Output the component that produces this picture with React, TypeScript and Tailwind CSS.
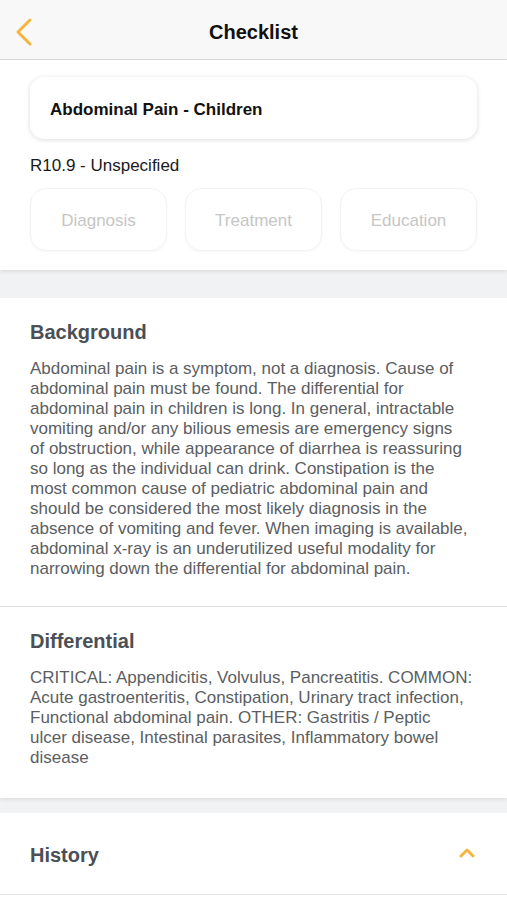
import React from "react";

const font = { fontFamily: '"Liberation Sans", Arial, sans-serif' };

function Section({ title, lines }: { title: string; lines: string[] }) {
  return (
    <div className="px-[30px] pt-[22px]">
      <h2 className="text-[20px] leading-[24px] font-bold text-[#4a5056]">{title}</h2>
      <div className="mt-[15px] text-[17px] leading-[20px] text-[#5b5e62]">
        {lines.map((l, i) => (
          <div key={i} className="whitespace-nowrap">
            {l}
          </div>
        ))}
      </div>
    </div>
  );
}

const background = [
  "Abdominal pain is a symptom, not a diagnosis. Cause of",
  "abdominal pain must be found. The differential for",
  "abdominal pain in children is long. In general, intractable",
  "vomiting and/or any bilious emesis are emergency signs",
  "of obstruction, while appearance of diarrhea is reassuring",
  "so long as the individual can drink. Constipation is the",
  "most common cause of pediatric abdominal pain and",
  "should be considered the most likely diagnosis in the",
  "absence of vomiting and fever. When imaging is available,",
  "abdominal x-ray is an underutilized useful modality for",
  "narrowing down the differential for abdominal pain.",
];

const differential = [
  "CRITICAL: Appendicitis, Volvulus, Pancreatitis. COMMON:",
  "Acute gastroenteritis, Constipation, Urinary tract infection,",
  "Functional abdominal pain. OTHER: Gastritis / Peptic",
  "ulcer disease, Intestinal parasites, Inflammatory bowel",
  "disease",
];

export default function App() {
  return (
    <div className="w-[507px] h-[900px] overflow-hidden bg-white" style={font}>
      {/* Header */}
      <div className="relative h-[60px] bg-[#f8f8f8] border-b border-[#d9d9d9] flex items-center justify-center">
        <svg className="absolute left-[12px] top-[16px]" width="24" height="32" viewBox="0 0 24 32">
          <polyline points="18,4 6,16 18,28" fill="none" stroke="#f4b63f" strokeWidth="3" strokeLinecap="round" strokeLinejoin="round" />
        </svg>
        <h1 className="pt-[4px] text-[20px] font-semibold text-[#111]">Checklist</h1>
      </div>

      {/* Top section */}
      <div className="relative z-10 bg-white px-[30px] pt-[17px] pb-[19px] shadow-[0_2px_3px_rgba(0,0,0,0.08)]">
        <div className="h-[62px] rounded-[14px] bg-white shadow-[0_1px_5px_rgba(0,0,0,0.14)] flex items-center px-[20px]">
          <span className="pt-[3px] text-[17px] font-bold text-[#111]">Abdominal Pain - Children</span>
        </div>
        <div className="mt-[17px] text-[17px] leading-[20px] text-[#1a1a1a]">R10.9 - Unspecified</div>
        <div className="mt-[12px] grid grid-cols-3 gap-[18px]">
          {["Diagnosis", "Treatment", "Education"].map((t) => (
            <div
              key={t}
              className="h-[63px] pt-[3px] rounded-[16px] border border-[#f2f2f2] shadow-[0_1px_3px_rgba(0,0,0,0.04)] flex items-center justify-center text-[17px] text-[#c6c6c6]"
            >
              {t}
            </div>
          ))}
        </div>
      </div>

      {/* Gray band */}
      <div className="h-[28px] bg-[#f1f2f4]" />

      {/* Content card */}
      <div className="relative z-10 bg-white shadow-[0_2px_4px_rgba(0,0,0,0.08)]">
        <div className="pb-[27px]">
          <Section title="Background" lines={background} />
        </div>
        <div className="border-t border-[#dcdcdc] pb-[30px]">
          <Section title="Differential" lines={differential} />
        </div>
      </div>

      <div className="h-[15px] bg-[#f1f2f4]" />

      {/* History row */}
      <div className="h-[82px] bg-white border-b border-[#e6e6e6] flex items-center justify-between px-[30px]">
        <span className="pt-[3px] text-[20px] leading-[24px] font-bold text-[#4a5056]">History</span>
        <svg width="16" height="12" viewBox="0 0 16 12" className="mr-[2px] mb-[2px]">
          <polyline points="2,9 8,3 14,9" fill="none" stroke="#f4b63f" strokeWidth="3" strokeLinecap="round" strokeLinejoin="round" />
        </svg>
      </div>
    </div>
  );
}
